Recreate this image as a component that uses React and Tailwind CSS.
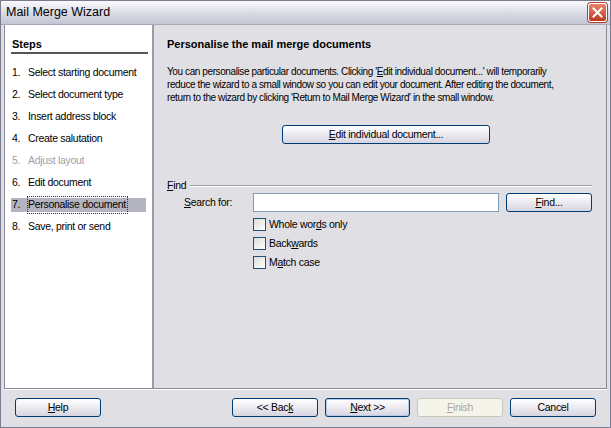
import React from 'react';

const steps = [
    { n: '1.', label: 'Select starting document' },
    { n: '2.', label: 'Select document type' },
    { n: '3.', label: 'Insert address block' },
    { n: '4.', label: 'Create salutation' },
    { n: '5.', label: 'Adjust layout', disabled: true },
    { n: '6.', label: 'Edit document' },
    { n: '7.', label: 'Personalise document', active: true },
    { n: '8.', label: 'Save, print or send' },
];

const XpButton = ({ children, className = '', disabled, primary }) => (
    <button
        className={
            'h-[19px] rounded-[3px] border text-[10.5px] tracking-[-0.3px] leading-none flex items-center justify-center ' +
            (disabled
                ? 'border-[#c9c7ba] bg-[#f5f4ea] text-[#aca899] '
                : primary
                    ? 'border-[#003c74] bg-gradient-to-b from-white via-[#eceaf0] to-[#d6d4e0] text-black shadow-[inset_0_0_0_1px_#b8c8e8] '
                    : 'border-[#003c74] bg-gradient-to-b from-white via-[#eceaf0] to-[#d6d4e0] text-black ') +
            className
        }
    >
        {children}
    </button>
);

const Check = ({ children }) => (
    <div className="flex items-center gap-[2px] h-[19px]">
        <span className="w-[13px] h-[13px] border border-[#1c5180] bg-gradient-to-br from-[#dcdcd7] to-white" />
        <span className="ml-[1px]">{children}</span>
    </div>
);

const App = () => {
    return (
        <div
            className="w-[611px] h-[428px] bg-[#e0dfe3] border border-[#7b7b90] flex flex-col text-[10.5px] tracking-[-0.3px] text-black overflow-hidden"
            style={{ fontFamily: '"Liberation Sans", Arial, sans-serif' }}
        >
            {/* Title bar */}
            <div className="h-[24px] shrink-0 flex items-center justify-between pl-[5px] pr-[3px] bg-gradient-to-b from-[#fafafd] via-[#dcdce6] to-[#c4c4d4] border-b border-[#a8a8b8]">
                <span className="text-[12.5px] tracking-normal text-black">Mail Merge Wizard</span>
                <div className="w-[19px] h-[19px] rounded-[3px] border border-white bg-gradient-to-b from-[#e8846c] to-[#c0361e] flex items-center justify-center shadow-[0_0_0_1px_#b04030]">
                    <svg width="11" height="11" viewBox="0 0 11 11">
                        <path d="M1.5 1.5 L9.5 9.5 M9.5 1.5 L1.5 9.5" stroke="white" strokeWidth="2" strokeLinecap="square" />
                    </svg>
                </div>
            </div>

            <div className="flex-1 flex flex-col px-[3px] pb-[3px]">
                {/* Main area */}
                <div className="flex-1 flex border border-[#8a8a9a] border-t-0">
                    {/* Steps */}
                    <div className="w-[149px] shrink-0 bg-white border-r-2 border-[#9c9caa] pl-[6px] pr-[4px] pt-[12px]">
                        <div className="font-bold text-[11px] tracking-normal border-b-2 border-[#555] pb-[1px] pl-[1px] leading-[14px]">Steps</div>
                        <div className="mt-[12px] flex flex-col gap-[8px]">
                            {steps.map((s) => (
                                <div
                                    key={s.n}
                                    className={
                                        'flex h-[14px] items-center pl-[1px] w-[135px] whitespace-nowrap ' +
                                        (s.disabled ? 'text-[#a0a0a8] ' : '') +
                                        (s.active ? 'bg-[#b4b4c0] ' : '')
                                    }
                                >
                                    <span className="w-[16px]">{s.n}</span>
                                    <span className={s.active ? 'outline outline-1 outline-dotted outline-[#333] pr-[1px]' : ''}>{s.label}</span>
                                </div>
                            ))}
                        </div>
                    </div>

                    {/* Content */}
                    <div className="flex-1 min-w-0 overflow-hidden pl-[13px] pr-[14px] pt-[12px]">
                        <div className="font-bold text-[11px] tracking-normal leading-[14px]">Personalise the mail merge documents</div>
                        <p className="mt-[14px] leading-[13px] whitespace-nowrap text-[10px] tracking-[-0.4px]">
                            You can personalise particular documents. Clicking '<u>E</u>dit individual document...' will temporarily<br />
                            reduce the wizard to a small window so you can edit your document. After editing the document,<br />
                            return to the wizard by clicking 'Return to Mail Merge Wizard' in the small window.
                        </p>
                        <div className="mt-[21px] flex">
                            <XpButton className="w-[208px] ml-[115px]"><span><u>E</u>dit individual document...</span></XpButton>
                        </div>

                        <div className="mt-[35px] flex items-center gap-[4px]">
                            <span className="leading-[13px]"><u>F</u>ind</span>
                            <div className="flex-1 h-[2px] border-t border-[#a0a0a8] border-b border-b-white" />
                        </div>
                        <div className="mt-[1px] flex items-center">
                            <span className="w-[86px] pl-[17px]"><u>S</u>earch for:</span>
                            <div className="w-[246px] h-[19px] bg-white border border-[#7f9db9]" />
                            <XpButton className="w-[86px] ml-[7px]"><span><u>F</u>ind...</span></XpButton>
                        </div>
                        <div className="mt-[3px] ml-[86px] flex flex-col">
                            <Check>Whole wor<u>d</u>s only</Check>
                            <Check>Back<u>w</u>ards</Check>
                            <Check>M<u>a</u>tch case</Check>
                        </div>
                    </div>
                </div>

                {/* Buttons */}
                <div className="h-[35px] shrink-0 flex items-center pl-[11px] pr-[11px] border-t border-white">
                    <XpButton className="w-[86px]"><span><u>H</u>elp</span></XpButton>
                    <div className="flex-1" />
                    <div className="flex gap-[7px]">
                        <XpButton className="w-[86px]"><span>&lt;&lt; Bac<u>k</u></span></XpButton>
                        <XpButton className="w-[85px]" primary><span><u>N</u>ext &gt;&gt;</span></XpButton>
                        <XpButton className="w-[86px]" disabled><span><u>F</u>inish</span></XpButton>
                        <XpButton className="w-[86px]"><span>Cancel</span></XpButton>
                    </div>
                </div>
            </div>
        </div>
    );
};

export default App;
